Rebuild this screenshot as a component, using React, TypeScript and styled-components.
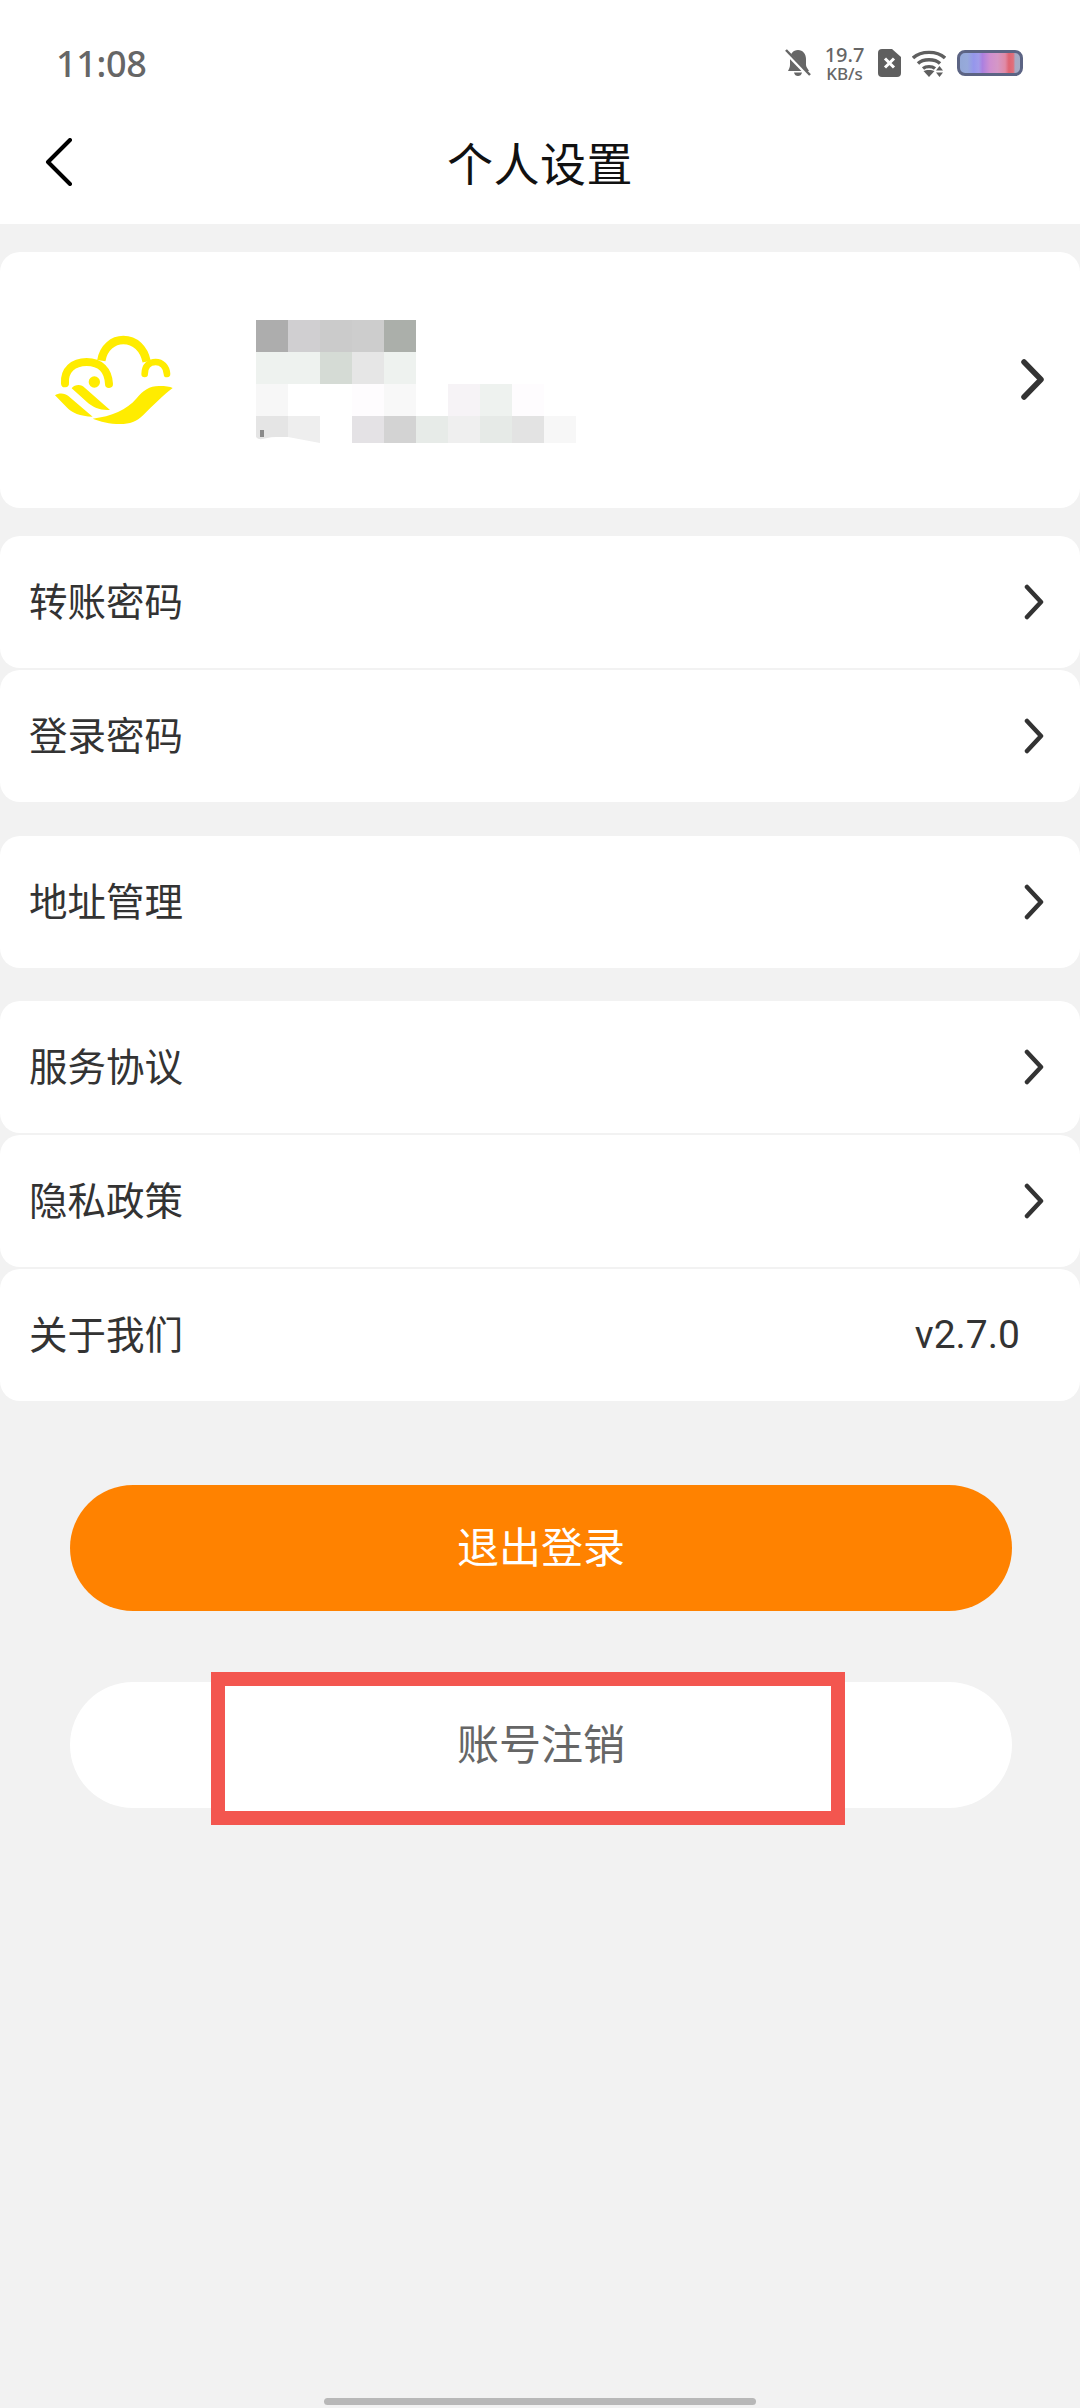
import React from "react";
import styled, { createGlobalStyle } from "styled-components";

const GlobalStyle = createGlobalStyle`
  html, body {
    margin: 0;
    padding: 0;
    background: #f2f2f2;
  }
  * {
    box-sizing: border-box;
  }
`;

const cjk = `"Noto Sans CJK SC", "Noto Sans", sans-serif`;

const mosaic: string[][] = [
  ["#adadad", "#d0cfd1", "#cbcbcb", "#cdcdcd", "#abafaa"],
  ["#eef2ef", "#eef2ef", "#d5dbd5", "#e6e6e6", "#eef2ef"],
  ["#f7f7f7", "#fff", "#fff", "#fefcfe", "#f8f8f8", "#fff", "#f6f3f6", "#eef2ef", "#fefcfe"],
  ["#e5e5e5", "#eeeeee", "#fff", "#e4e2e5", "#d3d3d3", "#e7ebe8", "#efefef", "#e6eae7", "#e3e3e3", "#f7f7f7"],
];

const groups = [
  { top: 28, items: [{ label: "转账密码" }, { label: "登录密码" }] },
  { top: 34, items: [{ label: "地址管理" }] },
  { top: 33, items: [{ label: "服务协议" }, { label: "隐私政策" }, { label: "关于我们", value: "v2.7.0" }] },
];

const App = () => {
  return (
    <Page>
      <GlobalStyle />
      <Header>
        <StatusBar>
          <Time>11:08</Time>
          <StatusIcons>
            <BellOff />
            <Speed>
              <b>19.7</b>
              <span>KB/s</span>
            </Speed>
            <SimOff />
            <Wifi />
            <Battery />
          </StatusIcons>
        </StatusBar>
        <NavBar>
          <BackIcon width="28" height="48" viewBox="0 0 28 48">
            <path d="M25 2 L3 24 L25 46" fill="none" stroke="#000" strokeWidth="4" strokeLinecap="round" strokeLinejoin="round" />
          </BackIcon>
          <Title>个人设置</Title>
        </NavBar>
      </Header>

      <ProfileCard>
        <ProfileLogo />
        <Mosaic />
        <ProfileChevron width="23" height="41" viewBox="0 0 23 41">
          <path d="M3 3 L20 20.5 L3 38" fill="none" stroke="#333" strokeWidth="5.5" strokeLinecap="round" strokeLinejoin="round" />
        </ProfileChevron>
      </ProfileCard>

      {groups.map((group) => (
        <Group key={group.items[0].label} $top={group.top}>
          {group.items.map((item) => (
            <Row key={item.label}>
              <RowLabel>{item.label}</RowLabel>
              {item.value ? (
                <RowValue>{item.value}</RowValue>
              ) : (
                <svg width="20" height="36" viewBox="0 0 20 36">
                  <path d="M3 3 L17 18 L3 33" fill="none" stroke="#333" strokeWidth="4.5" strokeLinecap="round" strokeLinejoin="round" />
                </svg>
              )}
            </Row>
          ))}
        </Group>
      ))}

      <LogoutButton>
        <ButtonText>退出登录</ButtonText>
      </LogoutButton>
      <CancelButton>
        <Highlight />
        <ButtonText>账号注销</ButtonText>
      </CancelButton>

      <HomeBar />
    </Page>
  );
};

export default App;

const BellOff = () => (
  <svg width="26" height="28" viewBox="0 0 26 28">
    <path
      d="M13 1 C18 1 21 5 21 10 L21 16 C21 18 23 20 24 22 L3 22 C4 20 5 18 5 16 L5 10 C5 5 8 1 13 1 Z M9 23.5 L17 23.5 C16.5 26 15 27 13 27 C11 27 9.500 26 9 23.500 Z"
      fill="#666"
    />
    <path d="M0 2 L24 27" stroke="#fff" strokeWidth="4" />
    <path d="M1 1 L25 26" stroke="#666" strokeWidth="2.500" />
  </svg>
);

const SimOff = () => (
  <svg width="23" height="28" viewBox="0 0 23 28">
    <path d="M4 0 L14 0 L23 8 L23 24 A4 4 0 0 1 19 28 L4 28 A4 4 0 0 1 0 24 L0 4 A4 4 0 0 1 4 0 Z" fill="#5f5f5f" />
    <path d="M7 9.500 L16 18.500 M16 9.500 L7 18.500" stroke="#fff" strokeWidth="3" />
  </svg>
);

const Wifi = () => (
  <svg width="34" height="28" viewBox="0 0 34 28">
    <g fill="none" stroke="#5f5f5f" strokeWidth="3.400">
      <path d="M1 9 C9 1.500 25 1.500 33 9" />
      <path d="M6 14.500 C11 9.500 23 9.500 28 14.500" />
      <path d="M11 19.500 C14 17 20 17 23 19.500" />
    </g>
    <path d="M11.500 22 C14 20.500 20 20.500 22.500 22 L17 28 Z" fill="#5f5f5f" />
    <path d="M27.500 17 L31 21.500 L24 21.500 Z M24 23.500 L31 23.500 L27.500 28 Z" fill="#5f5f5f" />
  </svg>
);

const Battery = () => (
  <svg width="66" height="26" viewBox="0 0 66 26">
    <defs>
      <linearGradient id="batteryFill" x1="0" x2="1" y1="0" y2="0">
        <stop offset="0" stopColor="#93a7d6" />
        <stop offset="0.14" stopColor="#97aadb" />
        <stop offset="0.24" stopColor="#9596ec" />
        <stop offset="0.32" stopColor="#a09cea" />
        <stop offset="0.38" stopColor="#ab80e0" />
        <stop offset="0.5" stopColor="#cf8fd0" />
        <stop offset="0.62" stopColor="#d597c6" />
        <stop offset="0.74" stopColor="#e08aa6" />
        <stop offset="0.8" stopColor="#df6472" />
        <stop offset="0.87" stopColor="#e0707c" />
        <stop offset="0.9" stopColor="#a9a9c4" />
        <stop offset="1" stopColor="#a2aec8" />
      </linearGradient>
    </defs>
    <rect x="1.500" y="1.500" width="63" height="23" rx="6.500" fill="url(#batteryFill)" stroke="#5c6484" strokeWidth="3" />
  </svg>
);

const ProfileLogo = () => (
  <LogoSvg width="150" height="120" viewBox="0 0 450 360">
    <g fill="none" stroke="#ffec00">
      <path d="M184 122 C190 82 220 60 250 60 C285 60 312 85 320 125" strokeWidth="25" />
      <path d="M75 190 C72 150 100 126 140 126 C180 126 205 150 207 192" strokeWidth="24" strokeLinecap="round" />
      <path d="M314 162 C314 135 330 126 347 126 C365 126 380 140 381 162" strokeWidth="20" strokeLinecap="round" />
    </g>
    <g fill="#ffec00">
      <circle cx="163" cy="186" r="17" />
      <path d="M45 226 C55 218 75 218 85 228 L158 290 C120 290 95 278 80 262 Z" />
      <path d="M95 205 C105 192 125 192 135 204 L210 270 C180 272 160 262 145 250 Z" />
      <path d="M158 296 C215 290 260 270 290 235 C310 210 330 197 360 198 C375 198 390 200 398 204 C370 225 340 255 310 285 C290 305 270 312 240 312 C210 312 180 305 158 296 Z" />
    </g>
  </LogoSvg>
);

// the blurred-out nickname, kept as the pixel blocks the screenshot has
const Mosaic = () => (
  <MosaicSvg width="384" height="128" viewBox="0 0 384 128">
    {mosaic.map((cells, r) =>
      cells.map((fill, c) => <rect key={`${r}-${c}`} x={c * 32} y={r * 32} width="32" height={r === 3 ? 27 : 32} fill={fill} />)
    )}
    <path d="M0 117 C4 122 10 117 20 117 L32 117 L64 123 L64 128 L0 128 Z" fill="#fff" />
    <path d="M96 123 L160 123 L160 128 L96 128 Z" fill="#fff" />
    <rect x="4" y="110" width="4" height="7" fill="#8a8a8a" />
  </MosaicSvg>
);

const Page = styled.div`
  width: 1080px;
  min-height: 2408px;
  display: flex;
  flex-direction: column;
  background: #f2f2f2;
`;

const Header = styled.div`
  background: #fff;
`;

const StatusBar = styled.div`
  height: 104px;
  padding: 22px 57px 0 56px;
  display: flex;
  align-items: center;
  justify-content: space-between;
`;

const Time = styled.span`
  font-family: "Noto Sans", sans-serif;
  font-size: 36px;
  font-weight: 500;
  color: #666;
  letter-spacing: -0.3px;
`;

const StatusIcons = styled.div`
  display: flex;
  align-items: center;
  gap: 11px;
`;

const Speed = styled.div`
  margin: 0 3px;
  display: flex;
  flex-direction: column;
  align-items: center;
  width: 39px;
  font-family: "Noto Sans", sans-serif;
  color: #666;

  b {
    font-size: 20px;
    font-weight: 500;
    line-height: 20px;
  }
  span {
    font-size: 17px;
    font-weight: 500;
    line-height: 17px;
  }
`;

const NavBar = styled.div`
  position: relative;
  height: 120px;
  display: flex;
  align-items: center;
  justify-content: center;
`;

const BackIcon = styled.svg`
  position: absolute;
  left: 45px;
  top: 34px;
`;

const Title = styled.h1`
  margin: 0;
  padding-bottom: 6px;
  font-family: ${cjk};
  font-size: 46px;
  font-weight: 400;
  color: #111;
  letter-spacing: 0.5px;
`;

const ProfileCard = styled.div`
  margin-top: 28px;
  height: 256px;
  padding: 0 36px 0 40px;
  background: #fff;
  border-radius: 20px;
  display: flex;
  align-items: center;
`;

const LogoSvg = styled.svg`
  flex: none;
`;

const MosaicSvg = styled.svg`
  flex: none;
  margin: 8px 0 0 66px;
`;

const ProfileChevron = styled.svg`
  margin-left: auto;
  margin-bottom: 2px;
`;

const Group = styled.div<{ $top: number }>`
  margin-top: ${(p) => p.$top}px;
  display: flex;
  flex-direction: column;
  gap: 2px;
`;

const Row = styled.div`
  height: 132px;
  padding: 0 36px 0 29px;
  background: #fff;
  border-radius: 20px;
  display: flex;
  align-items: center;
  justify-content: space-between;
`;

const RowLabel = styled.span`
  padding-bottom: 7px;
  font-family: ${cjk};
  font-size: 38.5px;
  color: #333;
`;

const RowValue = styled.span`
  margin-right: 24px;
  font-family: Roboto, sans-serif;
  font-size: 39px;
  font-weight: 400;
  color: #333;
`;

const LogoutButton = styled.div`
  margin: 84px 68px 0 70px;
  height: 126px;
  border-radius: 63px;
  background: #ff8200;
  color: #fff;
  display: flex;
  align-items: center;
  justify-content: center;
`;

const CancelButton = styled.div`
  position: relative;
  margin: 71px 68px 0 70px;
  height: 126px;
  border-radius: 63px;
  background: #fff;
  color: #666;
  display: flex;
  align-items: center;
  justify-content: center;
`;

const ButtonText = styled.span`
  position: relative;
  padding-bottom: 7px;
  font-family: ${cjk};
  font-size: 42px;
`;

const Highlight = styled.div`
  position: absolute;
  left: 141px;
  top: -10px;
  width: 634px;
  height: 153px;
  background: #fff;
  border: 14px solid #f3564f;
`;

const HomeBar = styled.div`
  margin: auto auto 3px;
  width: 432px;
  height: 7px;
  border-radius: 4px;
  background: #b8b8b8;
`;
